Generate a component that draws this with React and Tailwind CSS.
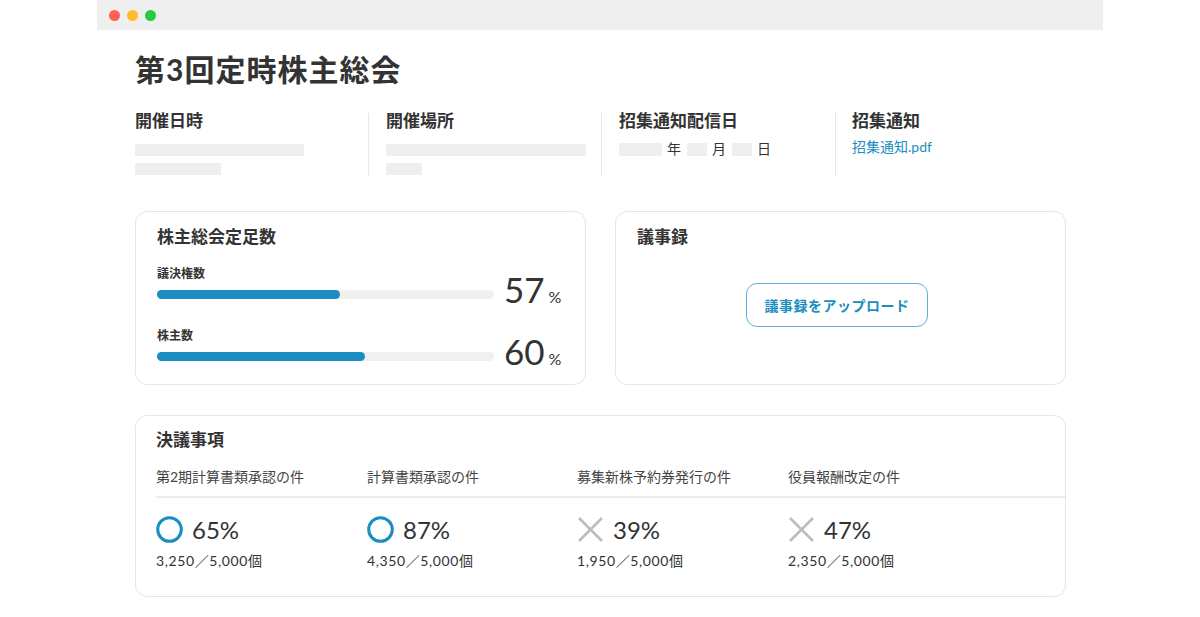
import React from "react";

const FONT = "[font-family:Lato,'Noto_Sans_CJK_JP',sans-serif]";

const resolutions = [
  { title: "第2期計算書類承認の件", passed: true, rate: 65, count: "3,250／5,000個" },
  { title: "計算書類承認の件", passed: true, rate: 87, count: "4,350／5,000個" },
  { title: "募集新株予約券発行の件", passed: false, rate: 39, count: "1,950／5,000個" },
  { title: "役員報酬改定の件", passed: false, rate: 47, count: "2,350／5,000個" },
];

const quorum = [
  { label: "議決権数", value: 57, fill: 183 },
  { label: "株主数", value: 60, fill: 208 },
];

const CircleMark = () => (
  <svg width="27" height="27" viewBox="0 0 27 27">
    <circle cx="13.5" cy="13.5" r="11.8" fill="none" stroke="#1a8ec0" strokeWidth="3" />
  </svg>
);

const CrossMark = () => (
  <svg width="27" height="27" viewBox="0 0 27 27">
    <path d="M2 2 L25 25 M25 2 L2 25" stroke="#bdbdbd" strokeWidth="2.6" />
  </svg>
);

const Placeholder = ({ className }) => <div className={`bg-[#efefef] ${className}`} />;

const App = () => {
  return (
    <div className={`min-h-[617px] bg-white text-[#333] ${FONT}`}>
      <div className="w-[1006px] mx-auto">
        {/* window bar */}
        <div className="h-[30px] bg-[#efefef] flex items-center gap-[7px] pl-[12px]">
          <span className="w-[11px] h-[11px] rounded-full bg-[#fe5f57]" />
          <span className="w-[11px] h-[11px] rounded-full bg-[#febc2e]" />
          <span className="w-[11px] h-[11px] rounded-full bg-[#28c840]" />
        </div>

        <div className="pl-[38px] pr-[37px]">
          <h1 className="mt-[19px] text-[30px] leading-[40px] font-bold tracking-[1px]">第3回定時株主総会</h1>

          {/* meeting info */}
          <div className="mt-[16px] grid grid-cols-[233px_233px_234px_1fr] items-start">
            <div className="pt-[4px]">
              <p className="text-[17px] leading-[24px] font-bold">開催日時</p>
              <Placeholder className="mt-[11px] w-[169px] h-[12px]" />
              <Placeholder className="mt-[7px] w-[86px] h-[12px]" />
            </div>
            <div className="mt-[8px] h-[63px] pl-[17px] border-l border-[#e8e8e8]">
              <div className="-mt-[4px]">
                <p className="text-[17px] leading-[24px] font-bold">開催場所</p>
                <Placeholder className="mt-[11px] w-[200px] h-[12px]" />
                <Placeholder className="mt-[7px] w-[36px] h-[12px]" />
              </div>
            </div>
            <div className="mt-[8px] h-[63px] pl-[17px] border-l border-[#e8e8e8]">
              <div className="-mt-[4px]">
                <p className="text-[17px] leading-[24px] font-bold">招集通知配信日</p>
                <div className="mt-[6px] flex items-center gap-[5px] text-[14px] leading-[20px]">
                  <Placeholder className="w-[43px] h-[13px]" />
                  <span>年</span>
                  <Placeholder className="w-[20px] h-[13px] ml-[1px]" />
                  <span>月</span>
                  <Placeholder className="w-[20px] h-[13px] ml-[1px]" />
                  <span>日</span>
                </div>
              </div>
            </div>
            <div className="mt-[8px] h-[63px] pl-[16px] border-l border-[#e8e8e8]">
              <div className="-mt-[4px]">
                <p className="text-[17px] leading-[24px] font-bold">招集通知</p>
                <a className="mt-[4px] block text-[14px] leading-[20px] text-[#1a8ec0]">招集通知.pdf</a>
              </div>
            </div>
          </div>

          {/* cards */}
          <div className="mt-[35px] grid grid-cols-2 gap-[29px]">
            <div className="h-[174px] border border-[#e6e6e6] rounded-[12px] px-[21px] pt-[13px]">
              <h2 className="text-[17px] leading-[24px] font-bold">株主総会定足数</h2>
              {quorum.map((q, i) => (
                <div key={q.label} className={`flex items-end gap-[10px] ${i === 0 ? "mt-[17px]" : "mt-[29px]"}`}>
                  <div className="flex-1">
                    <p className="text-[12px] leading-[16px] font-bold">{q.label}</p>
                    <div className="mt-[8px] h-[9px] rounded-full bg-[#f0f0f0]">
                      <div className="h-[9px] rounded-full bg-[#1a8ec0]" style={{ width: q.fill }} />
                    </div>
                  </div>
                  <div className="w-[60px] shrink-0 flex items-baseline mb-[-10px]">
                    <span className="text-[35px] leading-[36px]">{q.value}</span>
                    <span className="ml-[4px] text-[16px]">%</span>
                  </div>
                </div>
              ))}
            </div>

            <div className="h-[174px] border border-[#e6e6e6] rounded-[12px] px-[21px] pt-[13px]">
              <h2 className="text-[17px] leading-[24px] font-bold">議事録</h2>
              <button className="mt-[34px] ml-[109px] w-[182px] h-[44px] rounded-[11px] border border-[#5ab2da] text-[14px] font-bold text-[#1a8ec0] tracking-[0.5px]">
                議事録をアップロード
              </button>
            </div>
          </div>

          {/* resolutions */}
          <div className="mt-[30px] h-[182px] border border-[#e6e6e6] rounded-[12px] pt-[12px]">
            <h2 className="px-[20px] text-[17px] leading-[24px] font-bold">決議事項</h2>
            <div className="mt-[15px] px-[20px] grid grid-cols-[211px_210px_211px_211px]">
              {resolutions.map((r) => (
                <p key={r.title} className="text-[14px] leading-[20px] text-[#444]">{r.title}</p>
              ))}
            </div>
            <div className="mt-[9px] ml-[20px] h-[2px] bg-[#ececec]" />
            <div className="mt-[18px] px-[20px] grid grid-cols-[211px_210px_211px_211px]">
              {resolutions.map((r) => (
                <div key={r.title}>
                  <div className="flex items-center gap-[9px]">
                    {r.passed ? <CircleMark /> : <CrossMark />}
                    <span className="text-[24px] leading-[27px]">{r.rate}%</span>
                  </div>
                  <p className="mt-[8px] text-[14px] leading-[20px] tracking-[0.6px]">{r.count}</p>
                </div>
              ))}
            </div>
          </div>
        </div>
      </div>
    </div>
  );
};

export default App;
